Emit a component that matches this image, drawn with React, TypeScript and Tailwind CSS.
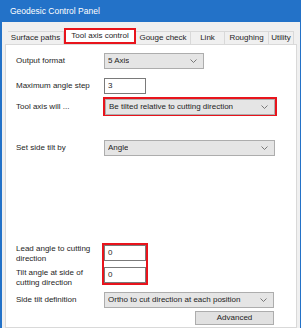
const Chevron = () => (
  <svg width="7" height="4" viewBox="0 0 7 4" className="shrink-0">
    <path d="M0.5 0.5 L3.5 3.5 L6.5 0.5" fill="none" stroke="#6b6b6b" strokeWidth="0.9" />
  </svg>
);

const Select = ({ value, className = "" }: { value: string; className?: string }) => (
  <div
    className={`flex h-[16px] items-center justify-between border border-[#adadad] bg-[#e5e5e5] pl-[3px] pr-[6px] ${className}`}
  >
    <span className="truncate">{value}</span>
    <Chevron />
  </div>
);

const Input = ({ value }: { value: string }) => (
  <div className="flex h-[16px] w-[42px] items-center border border-[#7a7a7a] bg-white pl-[3px]">
    {value}
  </div>
);

const tabs = [
  { name: "Surface paths", w: "w-[56px]" },
  { name: "Tool axis control", w: "w-[72px]", active: true },
  { name: "Gouge check", w: "w-[55px]" },
  { name: "Link", w: "w-[34px]" },
  { name: "Roughing", w: "w-[44px]" },
  { name: "Utility", w: "w-[25px]" },
];

export default function App() {
  return (
    <div className="flex h-[328px] w-[301px] flex-col overflow-hidden border-l-2 border-r border-[#2372c8] bg-[#f0f0f0] font-['Liberation_Sans',Arial,sans-serif] text-[8px] leading-[10px] text-[#1e1e1e]">
      {/* Title bar */}
      <div className="flex h-[22px] shrink-0 items-center bg-[#2372c8] pl-[8px] text-[8.5px] text-white">
        Geodesic Control Panel
      </div>

      {/* Tabs */}
      <div className="mt-[6px] flex h-[16px] shrink-0 items-end pl-[6px]">
        {tabs.map((t) =>
          t.active ? (
            <div
              key={t.name}
              className={`${t.w} flex h-[16px] items-center justify-center border-2 border-[#e8141c] bg-white`}
            >
              {t.name}
            </div>
          ) : (
            <div
              key={t.name}
              className={`${t.w} flex h-[13px] items-center justify-center border-r border-t border-[#d9d9d9] bg-[#f0f0f0]`}
            >
              {t.name}
            </div>
          ),
        )}
      </div>

      {/* Tab page */}
      <div className="ml-[3px] mr-[3px] flex flex-1 flex-col border border-[#d9d9d9] bg-white pl-[10px]">
        <div className="mt-[8px] flex items-center">
          <span className="w-[88px]">Output format</span>
          <Select value="5 Axis" className="w-[100px]" />
        </div>

        <div className="mt-[9px] flex items-center">
          <span className="w-[88px]">Maximum angle step</span>
          <Input value="3" />
        </div>

        <div className="mt-[3px] flex items-center">
          <span className="w-[87px]">Tool axis will ...</span>
          <div className="h-[19px] w-[174px] border-2 border-[#e8141c]">
            <Select value="Be tilted relative to cutting direction" className="h-[15px] w-full" />
          </div>
        </div>

        <div className="mt-[24px] flex items-center">
          <span className="w-[88px]">Set side tilt by</span>
          <Select value="Angle" className="w-[171px]" />
        </div>

        <div className="mt-[87px] flex items-start">
          <div className="flex h-[42px] w-[86px] flex-col gap-[4px] pt-[1px]">
            <span>
              Lead angle to cutting
              <br />
              direction
            </span>
            <span>
              Tilt angle at side of
              <br />
              cutting direction
            </span>
          </div>
          <div className="flex flex-col gap-[6px] border-2 border-[#e8141c]">
            <Input value="0" />
            <Input value="0" />
          </div>
        </div>

        <div className="mt-[7px] flex items-center">
          <span className="w-[88px]">Side tilt definition</span>
          <Select value="Ortho to cut direction at each position" className="w-[170px]" />
        </div>

        <div className="mt-[3px] flex pl-[179px]">
          <button className="flex h-[14px] w-[79px] items-center justify-center border border-[#adadad] bg-[#e1e1e1]">
            Advanced
          </button>
        </div>
      </div>
    </div>
  );
}
